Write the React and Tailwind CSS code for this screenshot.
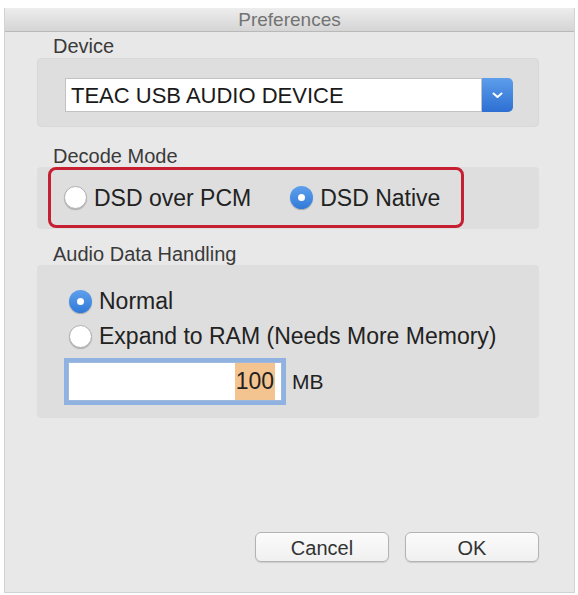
import React, { useState } from 'react';

const font = { fontFamily: '"Liberation Sans", Arial, sans-serif' };

function Radio({ checked, onClick, label, className = '' }) {
  return (
    <button type="button" onClick={onClick} className={`flex items-center gap-[7px] ${className}`}>
      {checked ? (
        <span className="flex h-[23px] w-[23px] items-center justify-center rounded-full bg-gradient-to-b from-[#5fa0ec] to-[#2f7ad8] shadow-[0_1px_1px_rgba(0,0,0,0.25)]">
          <span className="h-[7px] w-[7px] rounded-full bg-white" />
        </span>
      ) : (
        <span className="h-[23px] w-[23px] rounded-full border border-[#b0b0b0] bg-white shadow-[0_1px_1px_rgba(0,0,0,0.2)]" />
      )}
      <span className="text-[23px] leading-[24px] text-[#222]">{label}</span>
    </button>
  );
}

function GroupLabel({ children, className = '' }) {
  return <div className={`pl-[16px] text-[20px] leading-[22px] text-[#3a3a3a] ${className}`}>{children}</div>;
}

export default function App() {
  const [decode, setDecode] = useState('native');
  const [handling, setHandling] = useState('normal');

  return (
    <div className="h-[595px] w-[578px] bg-white pl-[4px] pt-[8px]" style={font}>
      <div className="flex h-[585px] w-[571px] flex-col border-x border-b border-[#d2d2d2] bg-[#e8e8e8]">
        {/* title bar */}
        <div className="flex h-[24px] items-center justify-center border-b border-[#b9b9b9] bg-gradient-to-b from-[#ededed] to-[#d5d5d5]">
          <span className="text-[19px] leading-[20px] text-[#737373]">Preferences</span>
        </div>

        <div className="flex flex-1 flex-col pl-[32px] pr-[35px]">
          <GroupLabel className="mt-[3px] h-[23px] leading-[23px]">Device</GroupLabel>
          <div className="h-[69px] rounded-[4px] border border-[#d8d8d8] bg-[#dedede] pl-[27px] pr-[25px] pt-[19px]">
            <div className="flex h-[34px]">
              <div className="flex flex-1 items-center border border-[#c2c2c2] bg-white pl-[5px] text-[22px] text-[#1a1a1a]">
                TEAC USB AUDIO DEVICE
              </div>
              <div className="flex w-[31px] items-center justify-center rounded-r-[5px] bg-gradient-to-b from-[#5d9deb] to-[#2d6fd2]">
                <svg width="11" height="7" viewBox="0 0 11 7">
                  <polyline points="1.5,1.5 5.5,5 9.5,1.5" fill="none" stroke="white" strokeWidth="2" strokeLinecap="round" strokeLinejoin="round" />
                </svg>
              </div>
            </div>
          </div>

          <GroupLabel className="mt-[18px]">Decode Mode</GroupLabel>
          <div className="h-[62px] rounded-[4px] bg-[#dedede] pl-[11px]">
            <div className="flex h-[61px] w-[416px] items-center rounded-[8px] border-[3px] border-[#c71f32] pl-[13px]">
              <Radio checked={decode === 'pcm'} onClick={() => setDecode('pcm')} label="DSD over PCM" />
              <Radio checked={decode === 'native'} onClick={() => setDecode('native')} label="DSD Native" className="ml-[39px]" />
            </div>
          </div>

          <GroupLabel className="mt-[14px]">Audio Data Handling</GroupLabel>
          <div className="flex h-[153px] flex-col items-start rounded-[4px] bg-[#dedede] pl-[32px] pt-[24px]">
            <Radio checked={handling === 'normal'} onClick={() => setHandling('normal')} label="Normal" />
            <Radio checked={handling === 'ram'} onClick={() => setHandling('ram')} label="Expand to RAM (Needs More Memory)" className="mt-[11px]" />
            <div className="ml-[-1px] mt-[14px] flex items-center">
              <div className="flex h-[39px] w-[214px] items-center justify-end border border-[#9fb8dc] bg-white pr-[6px] shadow-[0_0_0_4px_#8fb2e0]">
                <span className="bg-[#f3c490] px-[1px] text-[23px] leading-[37px] text-[#222]">100</span>
              </div>
              <span className="ml-[10px] text-[21px] text-[#222]">MB</span>
            </div>
          </div>

          <div className="mb-[30px] mt-auto flex justify-end gap-[16px]">
            <button type="button" className="h-[30px] w-[134px] rounded-[6px] border border-[#b3b3b3] bg-gradient-to-b from-[#fbfbfb] to-[#f0f0f0] text-[20px] text-[#333] shadow-[0_1px_1px_rgba(0,0,0,0.12)]">
              Cancel
            </button>
            <button type="button" className="h-[30px] w-[134px] rounded-[6px] border border-[#b3b3b3] bg-gradient-to-b from-[#fbfbfb] to-[#f0f0f0] text-[20px] text-[#333] shadow-[0_1px_1px_rgba(0,0,0,0.12)]">
              OK
            </button>
          </div>
        </div>
      </div>
    </div>
  );
}
